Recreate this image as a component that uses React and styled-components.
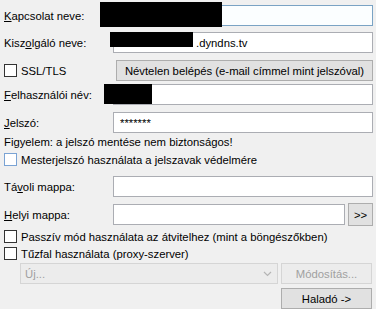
import React from "react";
import styled, { createGlobalStyle } from "styled-components";

const Global = createGlobalStyle`
  html, body { margin: 0; padding: 0; background: #f0f0f0; }
  body { font-family: "Liberation Sans", Arial, sans-serif; font-size: 11.3px; color: #000; }
`;

const Panel = styled.div`
  width: 376px;
  height: 309px;
  box-sizing: border-box;
  padding: 0 3px 0 4px;
  display: flex;
  flex-direction: column;
  overflow: hidden;
`;

const Row = styled.div`
  position: relative;
  display: flex;
  align-items: center;
  height: ${(p) => p.$h || 21}px;
  margin-top: ${(p) => p.$mt || 0}px;
  padding-left: ${(p) => p.$pl || 0}px;
  justify-content: ${(p) => (p.$end ? "flex-end" : "flex-start")};
`;

const Label = styled.span`
  width: ${(p) => p.$w || 109}px;
  flex: none;
  white-space: nowrap;
`;

const Key = styled.span`
  text-decoration: underline;
`;

const Field = styled.div`
  flex: 1;
  height: 21px;
  box-sizing: border-box;
  background: ${(p) => (p.$focus ? "#fbfeff" : "#fff")};
  border: 1px solid ${(p) => (p.$focus ? "#7aa3c4" : "#abadb3")};
  display: flex;
  align-items: center;
  padding-left: ${(p) => p.$pl || 3}px;
  white-space: nowrap;
`;

const Button = styled.div`
  box-sizing: border-box;
  height: ${(p) => p.$h || 21}px;
  width: ${(p) => (p.$w ? p.$w + "px" : "auto")};
  flex: ${(p) => (p.$w ? "none" : "1")};
  margin-left: ${(p) => p.$ml || 0}px;
  margin-right: ${(p) => p.$mr || 0}px;
  background: ${(p) => (p.$disabled ? "#ececec" : "#e1e1e1")};
  border: 1px solid ${(p) => (p.$disabled ? "#d5d5d5" : "#adadad")};
  color: ${(p) => (p.$disabled ? "#a0a0a0" : "#000")};
  display: flex;
  align-items: center;
  justify-content: center;
  white-space: nowrap;
`;

const Box = styled.span`
  width: 13px;
  height: 13px;
  box-sizing: border-box;
  flex: none;
  background: #fff;
  border: 1px solid ${(p) => (p.$hover ? "#7aa3d4" : "#333")};
  margin-right: 4px;
`;

const Check = styled.div`
  display: flex;
  align-items: center;
  width: ${(p) => (p.$w ? p.$w + "px" : "auto")};
  flex: none;
  white-space: nowrap;
`;

const Note = styled.div`
  height: 14px;
  line-height: 14px;
  margin-top: ${(p) => p.$mt || 0}px;
  white-space: nowrap;
`;

const Select = styled.div`
  box-sizing: border-box;
  width: ${(p) => p.$w}px;
  height: 21px;
  background: #ececec;
  border: 1px solid #d5d5d5;
  color: #a0a0a0;
  display: flex;
  align-items: center;
  justify-content: space-between;
  padding: 0 5px 0 4px;
`;

const Redact = styled.div`
  position: absolute;
  background: #000;
  left: ${(p) => p.$x}px;
  top: ${(p) => p.$y}px;
  width: ${(p) => p.$w}px;
  height: ${(p) => p.$hh}px;
`;

const Chevron = () => (
  <svg width="9" height="6" viewBox="0 0 9 6">
    <path d="M1 1 L4.5 4.5 L8 1" fill="none" stroke="#b5b5b5" strokeWidth="1.2" />
  </svg>
);

export default function App() {
  return (
    <>
      <Global />
      <Panel>
        <Row $mt={5}>
          <Label><Key>K</Key>apcsolat neve:</Label>
          <Field $focus />
          <Redact $x={96} $y={-3} $w={122} $hh={25} />
        </Row>
        <Row $mt={6}>
          <Label>Kisz<Key>o</Key>lgáló neve:</Label>
          <Field $pl={82}>.dyndns.tv</Field>
          <Redact $x={106} $y={0} $w={83} $hh={15} />
        </Row>
        <Row $mt={7}>
          <Check $w={112}><Box />SSL/TLS</Check>
          <Button>Névtelen belépés (e-mail címmel mint jelszóval)</Button>
        </Row>
        <Row $mt={3}>
          <Label><Key>F</Key>elhasználói név:</Label>
          <Field />
          <Redact $x={100} $y={0} $w={48} $hh={20} />
        </Row>
        <Row $mt={7}>
          <Label><Key>J</Key>elszó:</Label>
          <Field $pl={6}>*******</Field>
        </Row>
        <Note $mt={2}>Figyelem: a jelszó mentése nem biztonságos!</Note>
        <Row $h={13} $mt={4}>
          <Check><Box $hover />Mesterjelszó használata a jelszavak védelmére</Check>
        </Row>
        <Row $mt={10}>
          <Label>Tá<Key>v</Key>oli mappa:</Label>
          <Field />
        </Row>
        <Row $mt={6} $h={23}>
          <Label><Key>H</Key>elyi mappa:</Label>
          <Field />
          <Button $w={25} $h={23} $ml={3}>&gt;&gt;</Button>
        </Row>
        <Row $h={13} $mt={4}>
          <Check><Box />Passzív mód használata az átvitelhez (mint a böngészőkben)</Check>
        </Row>
        <Row $h={13} $mt={4}>
          <Check><Box />Tűzfal használata (proxy-szerver)</Check>
        </Row>
        <Row $mt={3} $pl={16}>
          <Select $w={258}><span>Új...</span><Chevron /></Select>
          <Button $w={91} $ml={3} $disabled>Módosítás...</Button>
        </Row>
        <Row $mt={4} $end>
          <Button $w={91} $mr={1}>Haladó -&gt;</Button>
        </Row>
      </Panel>
    </>
  );
}
